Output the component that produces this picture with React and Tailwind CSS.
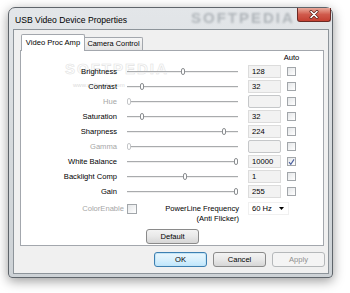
const rows = [
  { label: "Brightness", value: "128", thumb: 54 },
  { label: "Contrast", value: "32", thumb: 13 },
  { label: "Hue", value: "", thumb: 0, disabled: true },
  { label: "Saturation", value: "32", thumb: 13 },
  { label: "Sharpness", value: "224", thumb: 95 },
  { label: "Gamma", value: "", thumb: 0, disabled: true },
  { label: "White Balance", value: "10000", thumb: 107, checked: true },
  { label: "Backlight Comp", value: "1", thumb: 56 },
  { label: "Gain", value: "255", thumb: 107 },
];

function Check({ checked, className = "" }) {
  return (
    <div
      className={
        "w-[9px] h-[9px] border border-[#a2a6aa] bg-gradient-to-br from-[#e4e6e8] to-white flex items-center justify-center " +
        className
      }
    >
      {checked && (
        <svg width="8" height="8" viewBox="0 0 8 8">
          <path d="M1.2 4.2 L3.2 6.6 L6.9 1" fill="none" stroke="#4a5f9e" strokeWidth="1.3" />
        </svg>
      )}
    </div>
  );
}

function Slider({ thumb, disabled }) {
  return (
    <div className="relative w-[111px] h-[15px] flex items-center">
      <div className="w-full h-[2px] border-t border-[#a9abad] border-b border-b-[#eeeeee]" />
      <div
        className={
          "absolute top-[4px] w-[4px] h-[7px] rounded-[2px] border bg-white " +
          (disabled ? "border-[#c4c6c8]" : "border-[#8b8e91]")
        }
        style={{ left: thumb }}
      />
    </div>
  );
}

function Btn({ children, className = "", ...p }) {
  return (
    <div
      className={
        "w-[53px] h-[15px] rounded-[3px] border flex items-center justify-center text-[7.6px] " +
        className
      }
      {...p}
    >
      {children}
    </div>
  );
}

export default function App() {
  return (
    <div
      className="w-[350px] h-[293px] bg-white pt-[7px] pl-[8px] overflow-hidden text-black"
      style={{ fontFamily: '"Liberation Sans", Arial, sans-serif' }}
    >
      <div className="relative w-[325px] h-[271px] rounded-t-[7px] rounded-b-[4px] border border-[#5f656b] bg-gradient-to-b from-[#e3e6e9] via-[#d6dadd] to-[#cdd2d6] shadow-[0_3px_12px_rgba(0,0,0,0.4)] flex flex-col">
        {/* title bar */}
        <div className="relative h-[21px] flex items-center pl-[6px] pt-[3px]">
          <span className="text-[8.6px] leading-none relative z-10">USB Video Device Properties</span>
          <span className="absolute left-[182px] top-[2px] text-[15px] font-bold tracking-[2px] text-[#8d949a] opacity-60 blur-[1.2px] leading-none">
            SOFTPEDIA
          </span>
          <div className="absolute right-[1px] top-0 w-[34px] h-[14px] rounded-b-[3px] border border-t-0 border-[#6b2a25] bg-gradient-to-b from-[#e9a99b] via-[#d05a4c] to-[#c43f31] flex items-center justify-center">
            <svg width="10" height="9" viewBox="0 0 10 9">
              <path d="M2 1.5 L8 7.5 M8 1.5 L2 7.5" stroke="#5a1f1a" strokeWidth="3" strokeLinecap="round" />
              <path d="M2 1.5 L8 7.5 M8 1.5 L2 7.5" stroke="#ffffff" strokeWidth="1.6" strokeLinecap="round" />
            </svg>
          </div>
        </div>

        {/* client area */}
        <div className="ml-[4px] w-[316px] h-[245px] border border-[#8d949a] bg-[#f0f0f0] flex flex-col">
          {/* tabs */}
          <div className="flex items-end h-[16px] mt-[4px] pl-[7px]">
            <div className="relative z-10 w-[64px] h-[17px] mb-[-1px] bg-white border border-b-0 border-[#a3a7ad] rounded-t-[2px] flex items-center justify-center text-[7.6px] pb-[1px]">
              Video Proc Amp
            </div>
            <div className="w-[58px] h-[13px] border-t border-r border-[#a3a7ad] rounded-tr-[2px] bg-gradient-to-b from-[#f6f6f6] to-[#e4e4e4] flex items-center justify-center text-[7.4px]">
              Camera Control
            </div>
          </div>

          {/* panel */}
          <div className="relative ml-[6px] w-[304px] h-[196px] border border-[#a3a7ad] bg-white flex flex-col">
            <span className="absolute left-[44px] top-[10px] text-[15px] font-bold tracking-[2px] text-transparent leading-none [-webkit-text-stroke:0.6px_#e2e2e2]">
              SOFTPEDIA
            </span>
            <span className="absolute left-[52px] top-[31px] text-[6px] text-[#dcdcdc] leading-none">
              www.softpedia.com
            </span>

            <div className="h-[13px] flex items-center">
              <div className="w-[266px]" />
              <div className="w-[9px] flex justify-center text-[7.6px] leading-none pt-[1px]">
                <span className="whitespace-nowrap">Auto</span>
              </div>
            </div>

            {rows.map((r) => (
              <div key={r.label} className="relative h-[15px] flex items-center">
                <div
                  className={
                    "w-[96px] text-right text-[7.6px] leading-none " +
                    (r.disabled ? "text-[#a6a6a6]" : "")
                  }
                >
                  {r.label}
                </div>
                <div className="ml-[10px]">
                  <Slider thumb={r.thumb} disabled={r.disabled} />
                </div>
                <div
                  className={
                    "ml-[10px] w-[33px] h-[13px] border bg-[#f2f2f2] flex items-center pl-[3px] text-[7.6px] leading-none " +
                    (r.disabled ? "border-[#c5c7c9] rounded-[2px]" : "border-[#dcdcdc]")
                  }
                >
                  {r.value}
                </div>
                <Check checked={r.checked} className="ml-[6px]" />
              </div>
            ))}

            {/* power line row */}
            <div className="mt-[3px] h-[21px] flex items-start">
              <div className="w-[106px] h-[13px] pr-[3px] flex items-center justify-end text-[7.6px] text-[#a6a6a6] leading-none">
                ColorEnable
              </div>
              <Check className="mt-[2px] w-[10px] h-[10px]" />
              <div className="w-[102px] text-right text-[7.6px] leading-[10px] pt-[2px]">
                <div>PowerLine Frequency</div>
                <div>(Anti Flicker)</div>
              </div>
              <div className="ml-[9px] w-[41px] h-[13px] bg-white border border-[#f0f0f0] flex items-center justify-between pl-[3px] pr-[4px] text-[7.6px] leading-none">
                <span>60 Hz</span>
                <svg width="5" height="3" viewBox="0 0 5 3">
                  <path d="M0 0 L5 0 L2.5 3 Z" fill="#000" />
                </svg>
              </div>
            </div>

            <div className="mt-[6px] ml-[125px]">
              <Btn className="h-[14px] border-[#8a8a8a] bg-gradient-to-b from-[#f3f3f3] via-[#e8e8e8] to-[#d6d6d6]">
                Default
              </Btn>
            </div>
          </div>

          {/* bottom buttons */}
          <div className="mt-[6px] flex justify-end gap-[6px] pr-[3px]">
            <Btn className="border-[#3c7fb1] bg-gradient-to-b from-[#eaf6fd] via-[#d9f0fc] to-[#bee6fd] shadow-[inset_0_0_0_1px_#c2e4f6]">
              OK
            </Btn>
            <Btn className="border-[#8a8a8a] bg-gradient-to-b from-[#f3f3f3] via-[#e8e8e8] to-[#d6d6d6]">
              Cancel
            </Btn>
            <Btn className="border-[#b5b8ba] bg-[#f4f4f4] text-[#8f8f8f]">Apply</Btn>
          </div>
        </div>
      </div>
    </div>
  );
}
